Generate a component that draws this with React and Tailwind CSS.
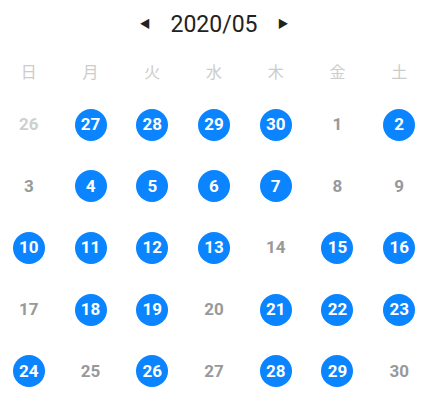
import React from 'react';

const WEEKDAYS = ['日', '月', '火', '水', '木', '金', '土'];

// [day, state] state: 'out' = other month, 'on' = marked, 'off' = plain
const DAYS = [
    [26, 'out'], [27, 'on'], [28, 'on'], [29, 'on'], [30, 'on'], [1, 'off'], [2, 'on'],
    [3, 'off'], [4, 'on'], [5, 'on'], [6, 'on'], [7, 'on'], [8, 'off'], [9, 'off'],
    [10, 'on'], [11, 'on'], [12, 'on'], [13, 'on'], [14, 'off'], [15, 'on'], [16, 'on'],
    [17, 'off'], [18, 'on'], [19, 'on'], [20, 'off'], [21, 'on'], [22, 'on'], [23, 'on'],
    [24, 'on'], [25, 'off'], [26, 'on'], [27, 'off'], [28, 'on'], [29, 'on'], [30, 'off'],
];

const DayCell = ({ day, state }) => {
    if (state === 'on') {
        return (
            <div className="h-[61.6px] flex items-center justify-center">
                <span className="w-[32px] h-[32px] rounded-full bg-[#0a84ff] text-white flex items-center justify-center text-[17px] font-bold leading-none">
                    {day}
                </span>
            </div>
        );
    }
    return (
        <div className="h-[61.6px] flex items-center justify-center">
            <span className={`text-[17px] font-bold leading-none ${state === 'out' ? 'text-[#cfcfcf]' : 'text-[#999999]'}`}>
                {day}
            </span>
        </div>
    );
};

const App = () => {
    return (
        <div className="w-[430px] h-[406px] bg-white overflow-hidden font-['Roboto','Noto_Sans_CJK_JP',sans-serif]">
            <div className="w-[432px] -ml-[2px]">
                {/* Month header */}
                <div className="h-12 flex items-center justify-center gap-[20px]">
                    <button className="text-[#222] text-[11px] leading-none">◀</button>
                    <span className="text-[23px] text-[#222] leading-none">2020/05</span>
                    <button className="text-[#222] text-[11px] leading-none">▶</button>
                </div>

                {/* Weekday labels */}
                <div className="grid grid-cols-7 h-[46px] items-center pt-1">
                    {WEEKDAYS.map((w) => (
                        <div key={w} className="text-center text-[16px] text-[#cccccc] leading-none">{w}</div>
                    ))}
                </div>

                {/* Days */}
                <div className="grid grid-cols-7">
                    {DAYS.map(([d, s], i) => (
                        <DayCell key={i} day={d} state={s} />
                    ))}
                </div>
            </div>
        </div>
    );
};

export default App;
